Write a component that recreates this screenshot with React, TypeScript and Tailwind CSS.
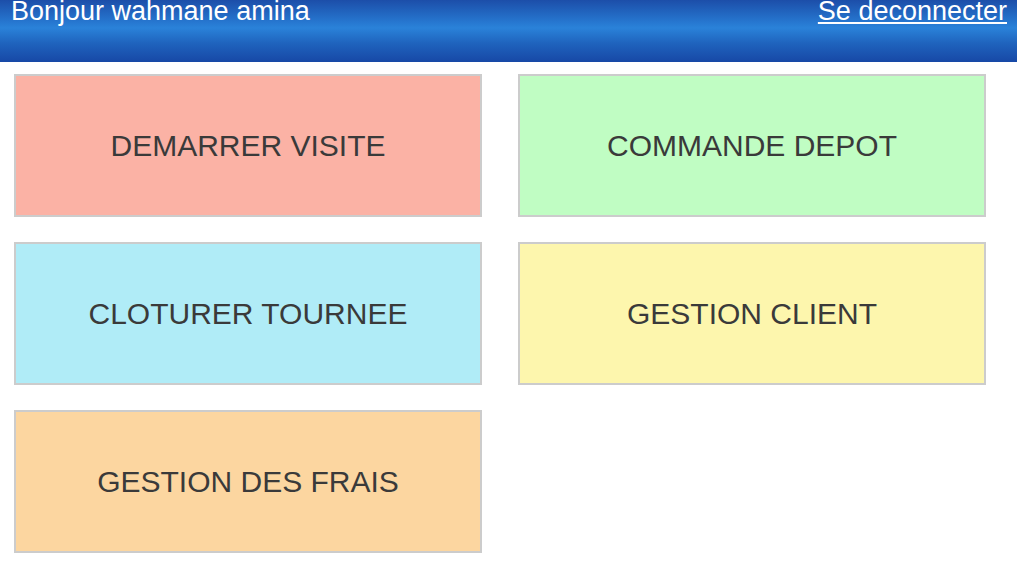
import React from "react";

const cards = [
  { label: "DEMARRER VISITE", bg: "bg-[#fbb2a5]" },
  { label: "COMMANDE DEPOT", bg: "bg-[#c0fdc3]" },
  { label: "CLOTURER TOURNEE", bg: "bg-[#b0ecf7]" },
  { label: "GESTION CLIENT", bg: "bg-[#fdf6ad]" },
  { label: "GESTION DES FRAIS", bg: "bg-[#fcd6a0]" },
];

export default function App() {
  return (
    <div className="w-[1017px] h-[580px] bg-white overflow-hidden" style={{ fontFamily: '"Liberation Sans", Arial, sans-serif' }}>
      <div className="h-[62px] bg-[linear-gradient(to_bottom,#1c4ea9_0%,#2676cf_35%,#2a82d9_45%,#1f63bd_70%,#1748a6_100%)] flex justify-between items-start pl-[11px] pr-[10px] text-white text-[27px] leading-[27px]">
        <span className="-mt-[2px]">Bonjour wahmane amina</span>
        <a href="#" className="underline -mt-[2px]">Se deconnecter</a>
      </div>
      <div className="grid grid-cols-[468px_468px] gap-x-[36px] gap-y-[25px] pt-[12px] pl-[14px]">
        {cards.map((c) => (
          <div key={c.label} className={`${c.bg} h-[143px] border-2 border-[#cccccc] flex items-center justify-center text-[#3a3a3a] text-[30px] leading-[30px]`}>
            {c.label}
          </div>
        ))}
      </div>
    </div>
  );
}
